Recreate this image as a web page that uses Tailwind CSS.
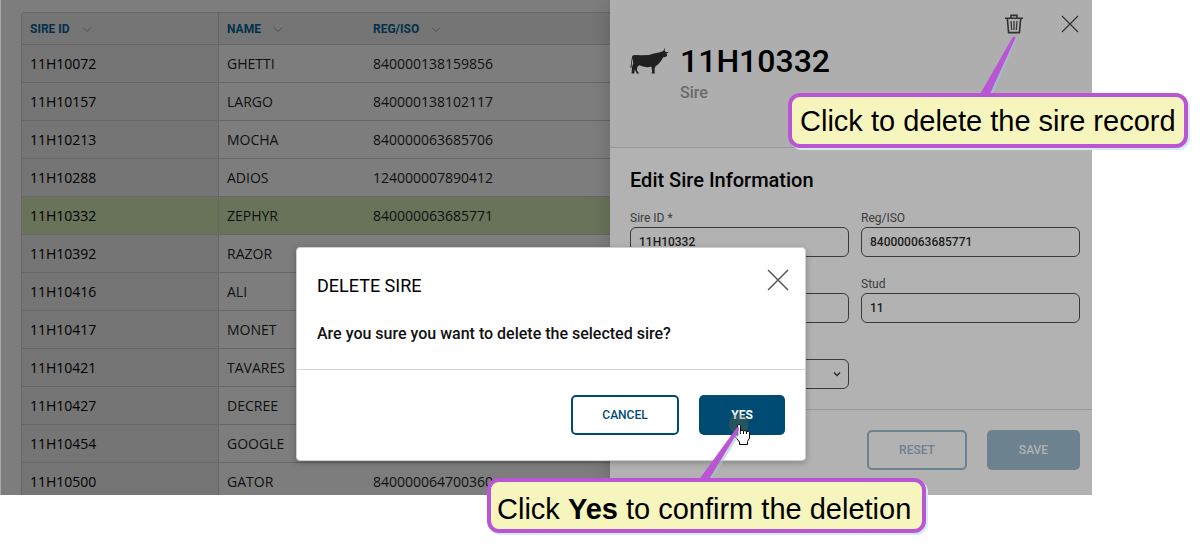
<!DOCTYPE html>
<html lang="en">
<head>
    <meta charset="UTF-8">
    <meta name="viewport" content="width=device-width, initial-scale=1.0">
    <title>Delete Sire</title>
    <script src="https://cdn.jsdelivr.net/npm/@tailwindcss/browser@4"></script>
</head>
<body class="relative min-h-screen bg-white font-['Roboto',sans-serif]">
    <div class="flex mr-[108px] border-l border-[#a8a8a8] bg-[#7d7d7d] overflow-hidden">
        <!-- Sire list -->
        <main class="flex-1 contain-size overflow-hidden pl-5 pt-3">
            <table class="w-full table-fixed border-separate border-spacing-0 border-l border-t border-[#676767] rounded-tl text-left font-['Open_Sans',sans-serif] text-sm text-[#101010]">
                <colgroup>
                    <col class="w-[197px]">
                    <col class="w-[146px]">
                    <col>
                </colgroup>
                <thead class="bg-[#757575] font-['Roboto',sans-serif] text-xs text-[#03304a]">
                    <tr class="h-8">
                        <th class="border-b border-r border-[#676767] pl-2 font-bold">
                            <span class="flex items-center gap-3">SIRE ID
                                <svg class="w-[10px] h-[10px]" viewBox="0 0 10 10" fill="none" stroke="#3f5561"><path d="M1 3.500 5 7.500l4-4"/></svg>
                            </span>
                        </th>
                        <th class="border-b border-[#676767] pl-2 font-bold">
                            <span class="flex items-center gap-3">NAME
                                <svg class="w-[10px] h-[10px]" viewBox="0 0 10 10" fill="none" stroke="#3f5561"><path d="M1 3.500 5 7.500l4-4"/></svg>
                            </span>
                        </th>
                        <th class="border-b border-[#676767] pl-2 font-bold">
                            <span class="flex items-center gap-3">REG/ISO
                                <svg class="w-[10px] h-[10px]" viewBox="0 0 10 10" fill="none" stroke="#3f5561"><path d="M1 3.500 5 7.500l4-4"/></svg>
                            </span>
                        </th>
                    </tr>
                </thead>
                <tbody id="sires"></tbody>
            </table>
        </main>

        <!-- Edit panel -->
        <aside class="relative w-[482px] shrink-0 bg-[#b2b2b2] shadow-[0_0_18px_rgba(0,0,0,0.18)]">
            <header class="bg-[#aeaeae] border-b border-[#9a9a9a] pt-3 pb-[41px] pl-5 pr-[10px]">
                <div class="flex justify-end gap-8 h-6 items-center">
                    <button type="button" aria-label="Delete sire" class="w-6 h-6 flex items-center justify-center">
                        <svg class="w-5 h-5" viewBox="0 0 20 20" fill="none" stroke="#333">
                            <path stroke-width="1.6" d="M1 4.2h18M7 4V1.4h6V4M3.3 4.5 4.6 18.6h10.8L16.7 4.5"/>
                            <path stroke-width="1.2" d="M7 7l.7 9M10 7v9M13 7l-.7 9"/>
                        </svg>
                    </button>
                    <button type="button" aria-label="Close panel" class="w-6 h-6 flex items-center justify-center">
                        <svg class="w-[18px] h-[18px]" viewBox="0 0 18 18" stroke="#333" stroke-width="1.2"><path d="M1 1l16 16M17 1 1 17"/></svg>
                    </button>
                </div>
                <div class="flex gap-[10px] pt-[6px]">
                    <svg class="w-10 h-7 mt-[5px]" viewBox="0 0 40 28" fill="#202020">
                        <path d="M2 10C2 8.5 3 8 5 7.9L11 8.3 19 8C22 6.6 25 5.8 29 5.4L32 4.6 33.2 4 35.3.6 34.6 4 36.2 5.2 39.3 4.400 36.600 6.400 37.200 8.800 36 9.800 33 10.400C31.500 13.500 29 17 25.600 19.300L24.600 21.800 24.700 26.600H21.500L22.200 24.200 21.300 19.600C17 21 12 19.400 9 18.300 7.400 19.800 6.700 21 7 23.500L9.200 26.600H6.800L4.800 22.400 4.200 26.600H1.600L2 20 3.200 16.500 2.700 11 1.900 15.500 1.400 21 .4 20.600Z"/>
                    </svg>
                    <div>
                        <h1 class="text-[32px] leading-[38px] font-medium text-black">11H10332</h1>
                        <p class="text-base leading-[26px] font-medium text-[#6a6a6a]">Sire</p>
                    </div>
                </div>
            </header>

            <form id="sire-form" class="pl-5 pr-3 pt-[18px] pb-5">
                <h2 class="text-xl leading-7 font-medium text-black mb-[15px]">Edit Sire Information</h2>
                <div class="grid grid-cols-2 gap-x-3 gap-y-[18px] text-xs">
                    <div>
                        <label for="sire-id" class="block leading-[18px] text-[#3c3c3c]">Sire ID *</label>
                        <input id="sire-id" type="text" value="11H10332" class="block w-full h-[30px] px-2 rounded-md border border-[#3a3a3a] text-xs font-medium text-[#1c1c1c]">
                    </div>
                    <div>
                        <label for="reg-iso" class="block leading-[18px] text-[#3c3c3c]">Reg/ISO</label>
                        <input id="reg-iso" type="text" value="840000063685771" class="block w-full h-[30px] px-2 rounded-md border border-[#3a3a3a] text-xs font-medium text-[#1c1c1c]">
                    </div>
                    <div class="pt-[18px]">
                        <input type="text" aria-label="Name" class="block w-full h-[30px] px-2 rounded-md border border-[#3a3a3a]">
                    </div>
                    <div>
                        <label for="stud" class="block leading-[18px] text-[#3c3c3c]">Stud</label>
                        <input id="stud" type="text" value="11" class="block w-full h-[30px] px-2 rounded-md border border-[#3a3a3a] text-xs font-medium text-[#1c1c1c]">
                    </div>
                    <div class="relative pt-[18px]">
                        <select aria-label="Breed" class="block w-full h-[30px] px-2 rounded-md border border-[#3a3a3a] appearance-none"></select>
                        <svg class="absolute right-2 bottom-[11px] w-2 h-2" viewBox="0 0 8 8" fill="none" stroke="#2a2a2a" stroke-width="1.4"><path d="M1 2.5 4 5.5l3-3"/></svg>
                    </div>
                </div>
            </form>

            <footer class="flex justify-end gap-5 border-t border-[#9a9a9a] pt-5 pb-[25px] pr-3 text-xs font-medium">
                <button type="reset" form="sire-form" class="w-[100px] h-10 rounded-[5px] border-2 border-[#6c828e] text-[#6c828e]">RESET</button>
                <button type="submit" form="sire-form" class="w-[93px] h-10 rounded-[5px] bg-[#6c828e] text-[#b2b2b2]">SAVE</button>
            </footer>
        </aside>
    </div>

    <!-- Delete confirmation -->
    <div role="dialog" aria-labelledby="dialog-title" class="absolute left-[296px] top-[247px] w-[510px] bg-white border border-[#cfcfcf] rounded shadow-[0_2px_6px_rgba(0,0,0,0.25)]">
        <div class="px-5 pt-5 pb-[23px] border-b border-[#d4d4d4]">
            <div class="flex justify-between items-center">
                <h2 id="dialog-title" class="text-lg leading-9 text-black">DELETE SIRE</h2>
                <button type="button" aria-label="Close dialog" class="self-start -mr-[5px] w-6 h-6 flex items-center justify-center">
                    <svg class="w-[22px] h-[22px]" viewBox="0 0 22 22" stroke="#555" stroke-width="1.5"><path d="M1 1l20 20M21 1 1 21"/></svg>
                </button>
            </div>
            <p class="mt-[18px] text-base leading-6 font-medium text-[#111]">Are you sure you want to delete the selected sire?</p>
        </div>
        <div class="flex justify-end gap-5 px-5 py-[25px] text-xs font-medium">
            <button type="button" class="w-[108px] h-10 rounded-[5px] border-2 border-[#004b73] text-[#004b73]">CANCEL</button>
            <button type="button" class="w-[86px] h-10 rounded-[5px] bg-[#004b73] text-white font-bold">YES</button>
        </div>
    </div>

    <!-- Pointer with its halo -->
    <svg class="absolute left-[726px] top-[412px] w-[32px] h-[36px]" viewBox="0 0 32 36">
        <circle cx="12.5" cy="12" r="10" fill="#6b6b3c" fill-opacity="0.35"/>
        <path fill="#fff" stroke="#000" d="M11.5 13.5q1.5-2.5 3 0V19q1.5-1.8 3 0 1.500-1.200 3 .6 2-1 3 1V26l-2 3.500V32.500H13.500V30L9 24.500q-.6-3 2.500-1Z"/>
        <path fill="none" stroke="#000" d="M14.500 18v4M17.500 19v3M20.500 19.500V22"/>
    </svg>

    <!-- Callouts -->
    <svg class="absolute left-[976px] top-[34px] w-[44px] h-[62px]" viewBox="0 0 44 62">
        <path fill="#a3bccb" d="M16 62 40 6 39 5 9 62Z"/>
        <path fill="#ba55d3" d="M3 62 36.500 3.500Q38.500 1.500 39.500 4L13 62Z"/>
    </svg>
    <p class="absolute left-[788px] top-[93px] px-2 pt-2 pb-[6px] whitespace-nowrap rounded-xl border-4 border-[#ba55d3] bg-[#f7f5be] shadow-[2px_2px_0_#d3ebfb] font-['Liberation_Sans',sans-serif] text-[29px] leading-[33px] text-black">Click to delete the sire record</p>

    <svg class="absolute left-[696px] top-[424px] w-[48px] h-[57px]" viewBox="0 0 48 57">
        <path fill="#a9c3d3" fill-opacity="0.6" d="M15 57 45 8 42 5 8 57Z"/>
        <path fill="#ba55d3" d="M2 57 40.500 4 42.500 2.500 43 6 12 57Z"/>
    </svg>
    <p class="absolute left-[487px] top-[478px] pl-[6px] pr-[11px] pt-[11px] pb-[3px] whitespace-nowrap rounded-xl border-4 border-[#ba55d3] bg-[#f7f5be] shadow-[2px_2px_0_#d3ebfb] font-['Liberation_Sans',sans-serif] text-[29px] leading-[33px] text-black">Click <b>Yes</b> to confirm the deletion</p>

    <script>
    const sires = [
        ['11H10072', 'GHETTI', '840000138159856'],
        ['11H10157', 'LARGO', '840000138102117'],
        ['11H10213', 'MOCHA', '840000063685706'],
        ['11H10288', 'ADIOS', '124000007890412'],
        ['11H10332', 'ZEPHYR', '840000063685771'],
        ['11H10392', 'RAZOR', ''],
        ['11H10416', 'ALI', ''],
        ['11H10417', 'MONET', ''],
        ['11H10421', 'TAVARES', ''],
        ['11H10427', 'DECREE', ''],
        ['11H10454', 'GOOGLE', ''],
        ['11H10500', 'GATOR', '840000064700360']
    ];
    const selected = '11H10332';

    document.getElementById('sires').innerHTML = sires.map(([id, name, reg]) => {
        const row = id === selected ? 'bg-[#69735a]' : '';
        const first = id === selected ? '' : 'bg-[#757575]';
        return `<tr class="h-[38px] ${row}">
            <td class="border-b border-r border-[#676767] pl-2 text-black ${first}">${id}</td>
            <td class="border-b border-[#676767] pl-2">${name}</td>
            <td class="border-b border-[#676767] pl-2">${reg}</td>
        </tr>`;
    }).join('');
    </script>
</body>
</html>
